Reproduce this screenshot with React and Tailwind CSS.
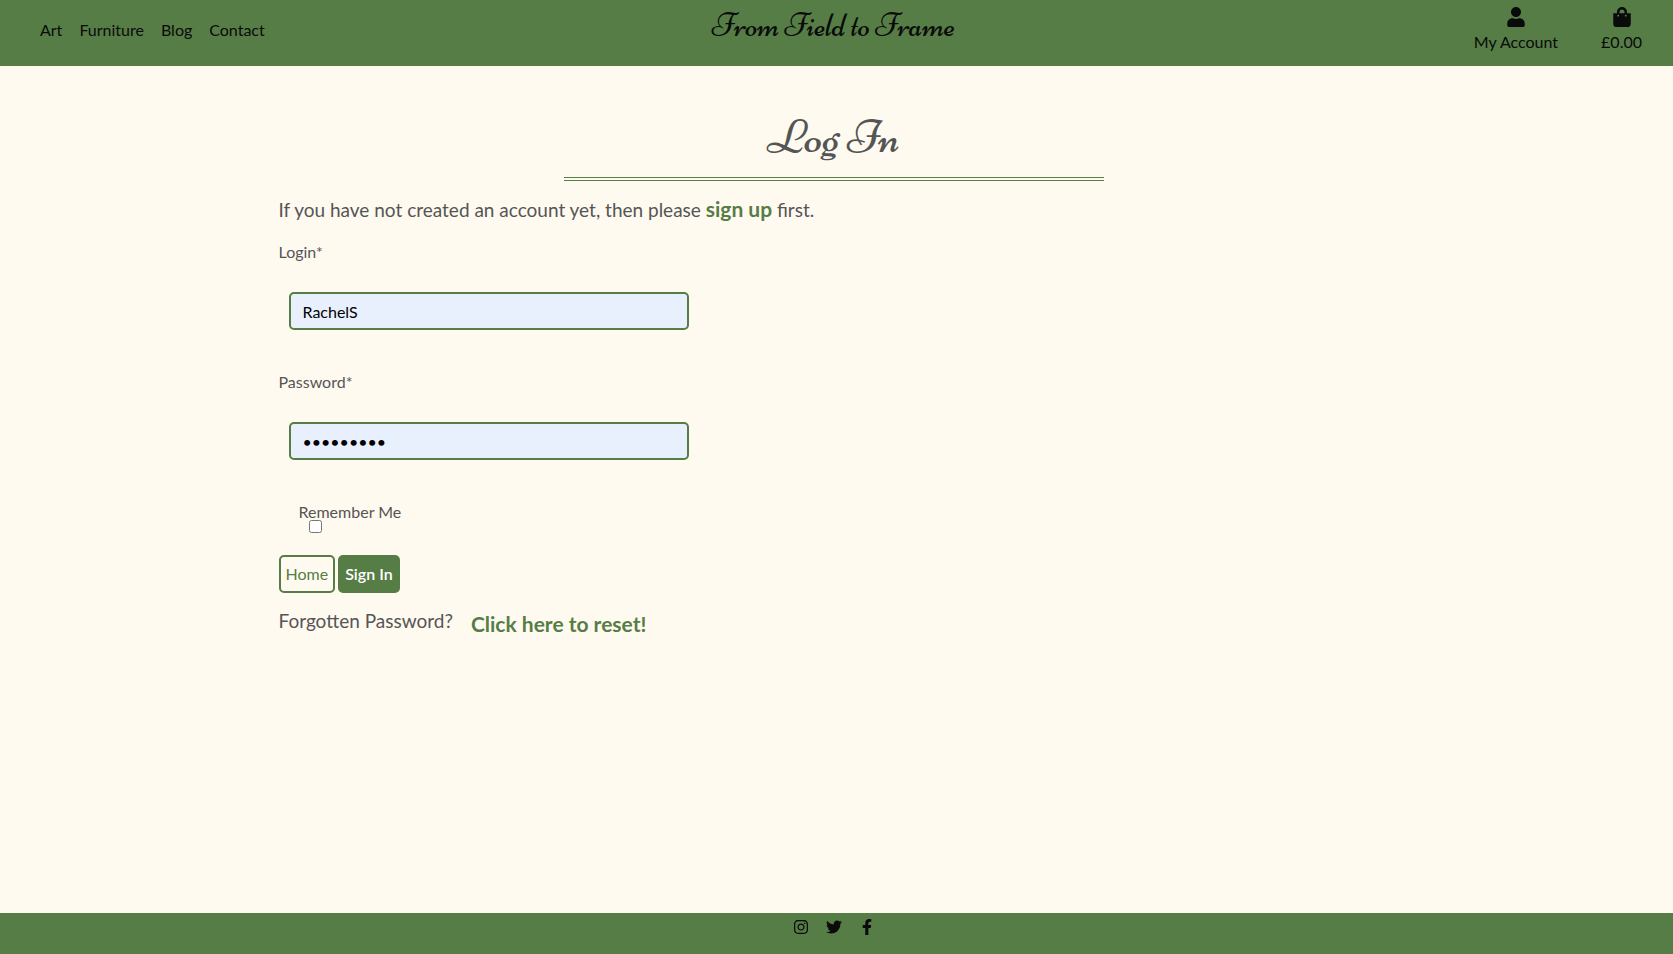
import React from "react";
import { FaUser, FaShoppingBag, FaInstagram, FaTwitter, FaFacebookF } from "react-icons/fa";

const links = ["Art", "Furniture", "Blog", "Contact"];

const socials = [
  { label: "Instagram", Icon: FaInstagram },
  { label: "Twitter", Icon: FaTwitter },
  { label: "Facebook", Icon: FaFacebookF },
];

function Header() {
  return (
    <header className="grid h-[66px] grid-cols-[1fr_auto_1fr] bg-[#567d46] pr-[6px] text-[#0a0a0a]">
      <nav className="flex items-center gap-[17px] pb-[6px] pl-10">
        {links.map((link) => (
          <a key={link} href="#">
            {link}
          </a>
        ))}
      </nav>
      <a
        href="#"
        className="pt-[6px] font-['Niconne','Playball','Liberation_Serif',cursive] text-[32px] leading-10"
      >
        From Field to Frame
      </a>
      <div className="flex items-start justify-end gap-[43px] pt-[7px] pr-[25px]">
        <a href="#" className="flex flex-col items-center gap-[3px]">
          <FaUser className="size-5" />
          <span className="leading-6">My Account</span>
        </a>
        <a href="#" className="flex flex-col items-center gap-[3px]">
          <FaShoppingBag className="size-5" />
          <span className="leading-6">£0.00</span>
        </a>
      </div>
    </header>
  );
}

function Field({ id, label, type, value }) {
  return (
    <div className="mb-10 flex flex-col items-start">
      <label htmlFor={id} className="leading-6">
        {label}
      </label>
      <input
        id={id}
        type={type}
        defaultValue={value}
        className="mt-7 ml-[10px] h-[38px] w-full max-w-[400px] rounded-[5px] border-2 border-[#567d46] bg-[#e8f0fe] px-3 text-black"
      />
    </div>
  );
}

export default function App() {
  return (
    <div className="flex min-h-screen flex-col bg-[#fffaf0] font-['Lato',sans-serif] text-base text-[#555]">
      <Header />
      <div className="flex-1 pr-[6px]">
        <main className="mx-auto w-full max-w-[1140px] px-[15px] pt-10">
          <h1 className="text-center font-['Niconne','Playball','Liberation_Serif',cursive] text-[48px] leading-[63px] font-medium">
            Log In
          </h1>
          <hr className="mx-auto mt-2 w-full max-w-[540px] border-t-4 border-double border-[#567d46]" />
          <p className="mt-[14px] mb-4 text-[19px] leading-7">
            If you have not created an account yet, then please{" "}
            <a href="#" className="text-[21px] font-bold text-[#567d46]">
              sign up
            </a>{" "}
            first.
          </p>
          <form onSubmit={(e) => e.preventDefault()}>
            <Field id="login" label="Login*" type="text" value="RachelS" />
            <Field id="password" label="Password*" type="password" value="fieldpass" />
            <div className="flex flex-col items-start pl-5">
              <label htmlFor="remember" className="leading-6">
                Remember Me
              </label>
              <input id="remember" type="checkbox" className="-mt-1 ml-[10px] size-[13px]" />
            </div>
            <div className="mt-[22px] flex gap-[3px]">
              <button type="button" className="h-[38px] rounded-[5px] border-2 border-[#567d46] px-[5px] text-[#567d46]">
                Home
              </button>
              <button type="submit" className="h-[38px] rounded-[5px] border-2 border-[#567d46] bg-[#567d46] px-[5px] font-semibold text-white">
                Sign In
              </button>
            </div>
          </form>
          <div className="mt-[14px] flex items-start gap-[18px] text-[19px] leading-7">
            <p>Forgotten Password?</p>
            <a href="#" className="pt-[3px] text-[21px] font-bold text-[#567d46]">
              Click here to reset!
            </a>
          </div>
        </main>
      </div>
      <footer className="flex h-[41px] items-start justify-center gap-[17px] bg-[#567d46] pt-[6px] pr-[6px] text-[#0a0a0a]">
        {socials.map(({ label, Icon }) => (
          <a key={label} href="#" aria-label={label}>
            <Icon className="size-4" />
          </a>
        ))}
      </footer>
    </div>
  );
}
